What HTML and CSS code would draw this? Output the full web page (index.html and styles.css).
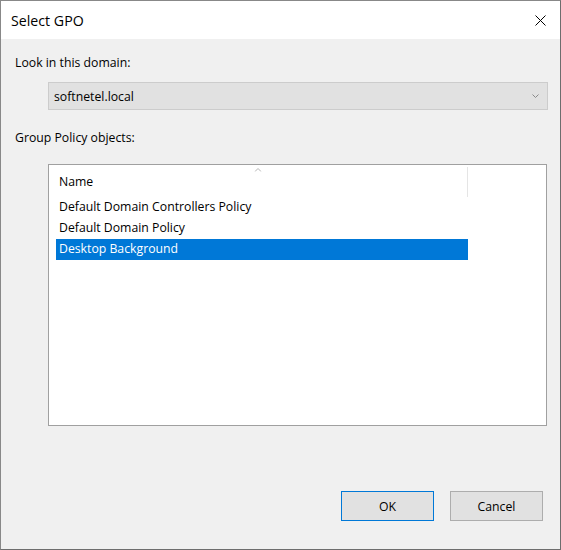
FILE: index.html
```html
<!DOCTYPE html>
<html>
<head>
<meta charset="utf-8">
<link rel="stylesheet" href="styles.css">
</head>
<body>
<div class="window">
  <div class="titlebar">
    <span class="title">Select GPO</span>
    <svg class="close" width="11" height="11" viewBox="0 0 11 11"><path d="M0.5 0.5 L10.5 10.5 M10.5 0.5 L0.5 10.5" stroke="#000" stroke-width="1" fill="none"/></svg>
  </div>
  <div class="content">
    <div class="label">Look in this domain:</div>
    <div class="combo">
      <span>softnetel.local</span>
      <svg class="chev" width="7" height="4" viewBox="0 0 7 4"><path d="M0.5 0.5 L3.5 3.5 L6.5 0.5" stroke="#8a8a8a" stroke-width="1" fill="none"/></svg>
    </div>
    <div class="label label-gap">Group Policy objects:</div>
    <div class="listbox">
      <div class="list-header">
        <div class="col-name">Name<svg class="sort-arrow" width="7" height="4" viewBox="0 0 7 4"><path d="M0.5 3.5 L3.5 0.5 L6.5 3.5" stroke="#b4b4b4" stroke-width="1" fill="none"/></svg></div>
      </div>
      <div class="rows">
        <div class="row">Default Domain Controllers Policy</div>
        <div class="row">Default Domain Policy</div>
        <div class="row selected">Desktop Background</div>
      </div>
    </div>
    <div class="buttons">
      <button class="btn btn-default">OK</button>
      <button class="btn">Cancel</button>
    </div>
  </div>
</div>
</body>
</html>
```
FILE: styles.css
```css
* { box-sizing: border-box; }
body {
  margin: 0;
  background: #fff;
  font-family: "Open Sans", "Noto Sans", sans-serif;
  color: #000;
}
.window {
  width: 561px;
  height: 550px;
  border: 1px solid #888;
  border-right-color: #6d6d6d;
  border-bottom-color: #6d6d6d;
  display: flex;
  flex-direction: column;
}
.titlebar {
  height: 38px;
  flex: none;
  background: #fff;
  display: flex;
  align-items: center;
  justify-content: space-between;
  padding: 0 14px 0 10px;
}
.title { font-size: 14.2px; }
.close { display: block; }
.content {
  flex: 1;
  background: #f0f0f0;
  padding: 16px 11px 0 14px;
  display: flex;
  flex-direction: column;
  align-items: flex-start;
}
.label {
  font-size: 12.25px;
  line-height: 16px;
}
.label-gap { margin-top: 20px; }
.combo {
  margin: 11px 0 0 33px;
  width: 500px;
  height: 28px;
  background: #e1e1e1;
  border: 1px solid #cccccc;
  display: flex;
  align-items: center;
  justify-content: space-between;
  padding: 0 8px 0 5px;
  font-size: 12.25px;
}
.chev { display: block; }
.listbox {
  margin: 18px 0 0 33px;
  width: 499px;
  height: 262px;
  background: #fff;
  border: 1px solid #a0a0a0;
}
.list-header {
  height: 32px;
  display: flex;
}
.col-name {
  position: relative;
  margin-top: 2px;
  width: 419px;
  height: 30px;
  line-height: 30px;
  padding-left: 10px;
  font-size: 12.25px;
  border-right: 1px solid #e5e5e5;
}
.sort-arrow {
  position: absolute;
  top: 1px;
  left: 50%;
  transform: translateX(-50%);
}
.rows { padding-left: 7px; }
.row {
  width: 412px;
  height: 21px;
  line-height: 20px;
  padding-left: 3px;
  font-size: 12.25px;
}
.row.selected {
  background: #0078d7;
  color: #fff;
}
.buttons {
  align-self: stretch;
  margin-top: 65px;
  display: flex;
  justify-content: flex-end;
  gap: 16px;
  padding-right: 6px;
}
.btn {
  width: 93px;
  height: 30px;
  padding: 0;
  background: #e1e1e1;
  border: 1px solid #adadad;
  font: 12.25px "Open Sans", "Noto Sans", sans-serif;
  color: #000;
}
.btn-default { border-color: #0078d7; }
```
